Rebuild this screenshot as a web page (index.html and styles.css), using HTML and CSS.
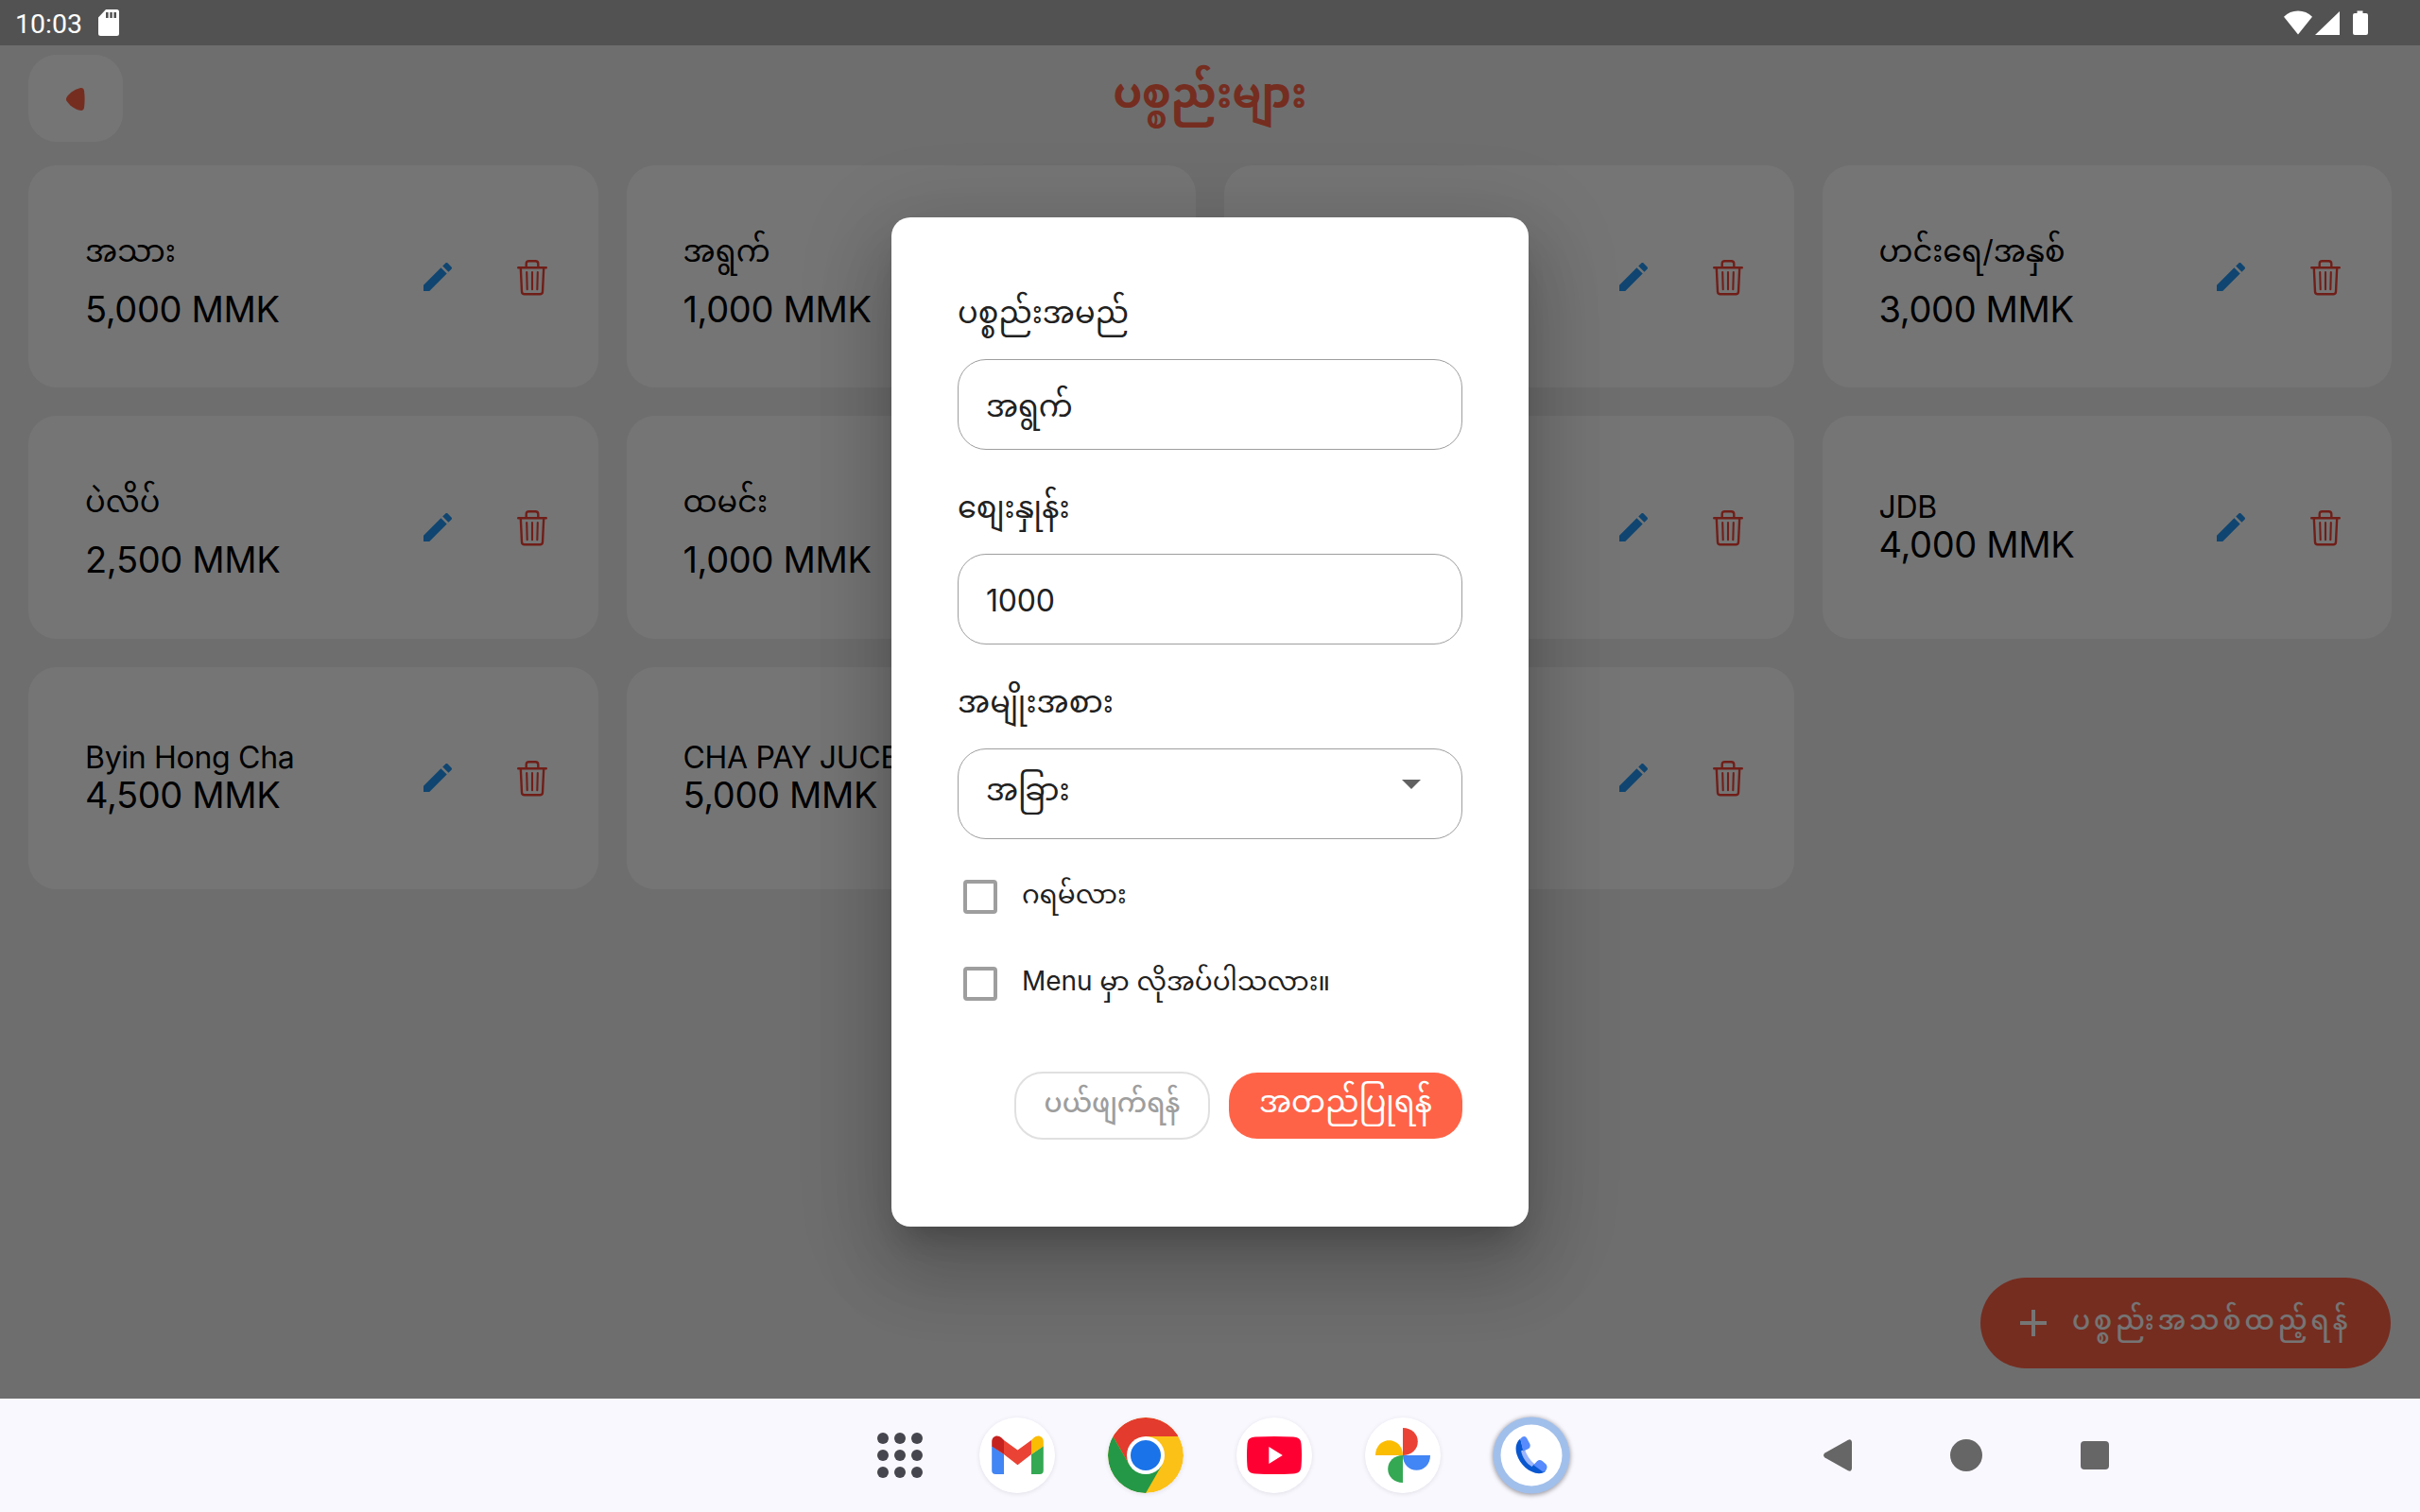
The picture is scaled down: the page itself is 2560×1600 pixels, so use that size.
FILE: index.html
```html
<!DOCTYPE html>
<html lang="my">
<head>
<meta charset="utf-8">
<title>ပစ္စည်းများ</title>
<link rel="stylesheet" href="styles.css">
</head>
<body>
<svg class="defs" aria-hidden="true">
  <symbol id="pencil" viewBox="0 0 24 24"><path d="M3 17.25V21h3.75L17.81 9.94l-3.75-3.75L3 17.25zM20.71 7.04c.39-.39.39-1.02 0-1.41l-2.34-2.34c-.39-.39-1.02-.39-1.41 0l-1.83 1.83 3.75 3.75 1.83-1.83z"/></symbol>
  <symbol id="trash" viewBox="0 0 32 38"><path fill="none" stroke="currentColor" stroke-width="2.4" stroke-linecap="round" stroke-linejoin="round" d="M1.2 8.2H30.8M9.7 8V4.2Q9.7 1.3 12.6 1.3H19.4Q22.3 1.3 22.3 4.2V8M3.8 8.2L5 33.6Q5.2 36.3 7.8 36.3H24.2Q26.8 36.3 27 33.6L28.2 8.2"/><path fill="none" stroke="currentColor" stroke-width="2.1" stroke-linecap="round" d="M10.2 13.1L10.7 31.2M16 13.1V31.2M21.8 13.1L21.3 31.2"/></symbol>
</svg>
<div class="app">
  <header class="status">
    <span class="clock">10:03</span>
    <svg class="sd" viewBox="0 0 22 28"><path fill="#fff" fill-rule="evenodd" d="M8 0H19.5Q22 0 22 2.5V25.5Q22 28 19.5 28H2.5Q0 28 0 25.5V8.5ZM8 3V9H10.6V3ZM12.3 3V9H14.8V3ZM16.4 3V9H19V3Z"/></svg>
    <svg class="signals" viewBox="0 0 90 28"><path fill="#fff" d="M15 25.5L0 6.8Q6.200 .5 15 .5T30 6.800ZM59 1V26H33ZM73 5Q73 3 75 3H77.500V.500H83.500V3H87Q89 3 89 5V24Q89 26 87 26H75Q73 26 73 24Z"/></svg>
  </header>
  <nav class="topbar">
    <button class="back"><svg viewBox="0 0 20 24"><path fill="#ff6347" d="M.3 10.500C2.500 6 8.500 1.500 14.500 .2C17.500-.3 18.600 1 19 3Q20.200 12 19 21C18.600 23 17.500 24.300 14.500 23.800C8.500 22.500 2.500 17.500 .3 13.500Q-.3 12 .3 10.500Z"/></svg></button>
    <h1>ပစ္စည်းများ</h1>
    <span class="topbar-end"></span>
  </nav>
  <main class="grid">
    <article class="card"><div class="info"><p class="name my">အသား</p><p class="price">5,000 MMK</p></div><svg class="edit"><use href="#pencil"/></svg><svg class="del"><use href="#trash"/></svg></article>
    <article class="card"><div class="info"><p class="name my">အရွက်</p><p class="price">1,000 MMK</p></div></article>
    <article class="card"><div class="info"></div><svg class="edit"><use href="#pencil"/></svg><svg class="del"><use href="#trash"/></svg></article>
    <article class="card"><div class="info"><p class="name my">ဟင်းရေ/အနှစ်</p><p class="price">3,000 MMK</p></div><svg class="edit"><use href="#pencil"/></svg><svg class="del"><use href="#trash"/></svg></article>
    <article class="card"><div class="info"><p class="name my">ပဲလိပ်</p><p class="price">2,500 MMK</p></div><svg class="edit"><use href="#pencil"/></svg><svg class="del"><use href="#trash"/></svg></article>
    <article class="card"><div class="info"><p class="name my">ထမင်း</p><p class="price">1,000 MMK</p></div></article>
    <article class="card"><div class="info"></div><svg class="edit"><use href="#pencil"/></svg><svg class="del"><use href="#trash"/></svg></article>
    <article class="card"><div class="info"><p class="name">JDB</p><p class="price">4,000 MMK</p></div><svg class="edit"><use href="#pencil"/></svg><svg class="del"><use href="#trash"/></svg></article>
    <article class="card"><div class="info"><p class="name">Byin Hong Cha</p><p class="price">4,500 MMK</p></div><svg class="edit"><use href="#pencil"/></svg><svg class="del"><use href="#trash"/></svg></article>
    <article class="card"><div class="info"><p class="name">CHA PAY JUCE</p><p class="price">5,000 MMK</p></div></article>
    <article class="card"><div class="info"></div><svg class="edit"><use href="#pencil"/></svg><svg class="del"><use href="#trash"/></svg></article>
  </main>
  <button class="fab"><svg viewBox="0 0 28 28"><path fill="#fff" d="M12 0H16V12H28V16H16V28H12V16H0V12H12Z"/></svg><span>ပစ္စည်းအသစ်ထည့်ရန်</span></button>
  <div class="scrim"></div>
  <section class="dialog" role="dialog">
    <label class="label">ပစ္စည်းအမည်</label>
    <div class="field">အရွက်</div>
    <label class="label">စျေးနှုန်း</label>
    <div class="field">1000</div>
    <label class="label">အမျိုးအစား</label>
    <div class="field select"><span>အခြား</span><svg viewBox="0 0 20 10"><path fill="#616161" d="M0 0H20L10 10Z"/></svg></div>
    <div class="checks">
      <div class="check"><i></i><span>ဂရမ်လား</span></div>
      <div class="check"><i></i><span>Menu မှာ လိုအပ်ပါသလား။</span></div>
    </div>
    <div class="actions"><button class="cancel"><span>ပယ်ဖျက်ရန်</span></button><button class="ok"><span>အတည်ပြုရန်</span></button></div>
  </section>
</div>
<footer class="taskbar">
  <div class="apps">
    <svg class="drawer" viewBox="0 0 48 48"><g fill="#46464f"><circle cx="6" cy="6" r="6"/><circle cx="24" cy="6" r="6"/><circle cx="42" cy="6" r="6"/><circle cx="6" cy="24" r="6"/><circle cx="24" cy="24" r="6"/><circle cx="42" cy="24" r="6"/><circle cx="6" cy="42" r="6"/><circle cx="24" cy="42" r="6"/><circle cx="42" cy="42" r="6"/></g></svg>
    <svg class="icon" viewBox="0 0 80 80"><circle cx="40" cy="40" r="40" fill="#fff"/><path fill="#4285f4" d="M13.200 30L26 39V60H17.200Q13.200 60 13.200 56Z"/><path fill="#34a853" d="M55 39L67.800 30V56Q67.800 60 63.800 60H55Z"/><path fill="#ea4335" d="M26 24L40.500 34.500L55 24V39L40.500 50.200L26 39Z"/><path fill="#c5221f" d="M26 39L13.200 30.500V25.500C13.200 19.500 19.500 17.500 23.500 21.500L26 24Z"/><path fill="#fbbc04" d="M55 39L67.800 30.500V25.500C67.800 19.500 61.500 17.500 57.500 21.500L55 24Z"/></svg>
    <svg class="icon" viewBox="0 0 80 80"><circle cx="40" cy="40" r="40" fill="#fcc117"/><path fill="#e33b2e" d="M40 40L22.700 50L5.360 20A40 40 0 0 1 74.640 20H40Z"/><path fill="#249847" d="M5.360 20L22.700 50L40 55L57.300 50L40 80A40 40 0 0 1 5.360 20Z"/><circle cx="40" cy="40" r="20" fill="#fff"/><circle cx="40" cy="40" r="16" fill="#1a73e8"/></svg>
    <svg class="icon" viewBox="0 0 80 80"><circle cx="40" cy="40" r="40" fill="#fff"/><path fill="#ff0033" d="M20 20.600Q40 19.400 60 20.600C66 21 68.200 23 68.600 29Q69.400 40 68.600 51C68.200 57 66 59 60 59.400Q40 60.600 20 59.400C14 59 11.800 57 11.400 51Q10.600 40 11.400 29C11.800 23 14 21 20 20.600Z"/><path fill="#fff" d="M34.300 31V49L48.800 40Z"/></svg>
    <svg class="icon" viewBox="0 0 80 80"><circle cx="40" cy="40" r="40" fill="#fff"/><path fill="#ea4335" d="M40 11C49.500 11 55.800 17.500 55.800 25.500S49.500 40 40 40Z"/><path fill="#4285f4" d="M69 40C69 49.500 62.500 55.800 54.500 55.800S40 49.500 40 40Z"/><path fill="#34a853" d="M40 69C30.500 69 24.200 62.500 24.200 54.500S30.500 40 40 40Z"/><path fill="#fbbc04" d="M11 40C11 30.500 17.500 24.200 25.500 24.200S40 30.500 40 40Z"/></svg>
    <svg class="icon phone" viewBox="0 0 80 80"><circle cx="40" cy="40" r="40.500" fill="#a1bfeb"/><circle cx="40" cy="40" r="32.500" fill="#fff"/><path fill="#9bb5ff" d="M29 36L33 34Q36 43 43 49L40 53Q31 47 29 36Z"/><path fill="#0957d0" d="M28.300 22.500C23.500 26 22.600 33 24.500 39C28 50 37.500 58.500 48 59.300Q53 59.200 55 56.500L42.500 49.500L40.500 52C34.500 48.500 30.500 42.500 29.200 35.500L31.500 34.500Z"/><path fill="#578bfe" d="M28.300 22.500L30.500 20.600Q33.500 19 35.200 22L38.400 28Q39.600 32 36.500 33.300L31.200 35.700ZM42.200 50.300L46 46.300Q48.500 44 51.500 46L55.500 49.500Q58 53 54.500 56.800L52.500 57.800Z"/></svg>
  </div>
  <div class="nav">
    <svg viewBox="0 0 34 34"><path fill="#666" d="M28 .8Q31.800-.8 32 3.500V30.500Q31.800 34.800 28 33.200L3.500 19.500Q.5 17 3.500 14.500Z"/></svg>
    <svg viewBox="0 0 34 34"><circle cx="17" cy="17" r="17" fill="#666"/></svg>
    <svg viewBox="0 0 34 34"><rect x="2" y="2" width="30" height="30" rx="4" fill="#666"/></svg>
  </div>
</footer>
</body>
</html>
```
FILE: styles.css
```css
* { box-sizing: border-box; margin: 0; padding: 0; }
body { width: 2560px; height: 1600px; overflow: hidden; font-family: Inter, "Noto Sans Myanmar", Padauk, sans-serif; color: #000; }
button { border: 0; background: none; font: inherit; }
.defs { position: absolute; width: 0; height: 0; }
.app { position: relative; height: 1480px; background: #f0f0f0; overflow: hidden; }

.status { position: relative; z-index: 2; height: 48px; padding: 0 70px 0 16px; display: flex; align-items: center; background: #525252; color: #fff; font: 28.5px/48px Roboto, sans-serif; }
.clock { padding-top: 3px; }
.sd { width: 22px; height: 28px; margin-left: 17px; }
.signals { width: 90px; height: 28px; margin-left: auto; margin-right: -16px; margin-top: 1px; }

.topbar { height: 127px; padding: 10px 30px 0; display: flex; align-items: flex-start; justify-content: space-between; }
.back, .topbar-end { width: 100px; height: 92px; }
.back { border-radius: 30px; background: #fff; display: flex; align-items: center; justify-content: center; }
.back svg { width: 20px; height: 24px; margin-top: 2px; }
h1 { color: #ff6347; font-size: 44px; font-weight: 700; line-height: 80px; }

.grid { display: grid; grid-template-columns: repeat(4, 1fr); grid-auto-rows: 235.35px; gap: 30px; padding: 0 30px; }
.card { background: #fff; border-radius: 30px; padding: 0 54px 0 60px; display: flex; align-items: center; }
.info { flex: 1; }
.name { font-size: 32px; line-height: 37px; white-space: nowrap; letter-spacing: -.3px; }
.name.my { line-height: 56px; margin-bottom: 12px; letter-spacing: 0; padding-top: 1px; }
.price { font-size: 38px; line-height: 43px; white-space: nowrap; letter-spacing: -.35px; }
.edit { width: 40px; height: 40px; fill: #2196f3; }
.del { width: 32px; height: 38px; margin: 2px 0 0 64px; color: #f44336; }

.fab { position: absolute; left: 2095px; top: 1352px; width: 434px; height: 96px; border-radius: 48px; background: #ff6347; color: #fff; display: flex; align-items: center; padding-left: 42px; }
.fab svg { width: 28px; height: 28px; }
.fab span { margin-left: 27px; font-size: 28px; font-weight: 500; line-height: 40px; padding-bottom: 7px; letter-spacing: 3.9px; white-space: nowrap; }
.scrim { position: absolute; inset: 48px 0 0; background: rgba(0, 0, 0, .54); }

.dialog { position: absolute; left: 943px; top: 230px; width: 674px; height: 1068px; border-radius: 20px; background: #fff; padding: 73px 70px 0; color: #212121; display: flex; flex-direction: column; box-shadow: 0 22px 30px -14px rgba(0,0,0,.2), 0 48px 76px 6px rgba(0,0,0,.14), 0 18px 92px 16px rgba(0,0,0,.12); }
.label { font-size: 32px; line-height: 56px; margin-bottom: 21px; }
.field { height: 96px; flex: none; margin-bottom: 33px; border: 1px solid #9e9e9e; border-radius: 30px; padding: 3px 29px 0; display: flex; align-items: center; font-size: 32px; line-height: 56px; letter-spacing: -.2px; }
.select { justify-content: space-between; padding: 0 43px 9px 29px; margin-bottom: 15px; }
.select svg { width: 20px; height: 10px; margin-bottom: 11px; }
.check { height: 92px; display: flex; align-items: center; padding-left: 6px; font-size: 28px; line-height: 48px; letter-spacing: -.08px; }
.check i { width: 36px; height: 36px; border: 4px solid #9e9e9e; border-radius: 4px; }
.check span { margin-left: 26px; padding-bottom: 6px; }
.actions { margin-top: 47px; display: flex; justify-content: flex-end; align-items: center; gap: 20px; }
.cancel, .ok { display: flex; justify-content: center; border-radius: 30px; white-space: nowrap; }
.cancel { width: 207px; height: 72px; border: 2px solid #e0e0e0; color: #9e9e9e; font-size: 28px; font-weight: 500; line-height: 62px; }
.ok { width: 247px; height: 70px; background: #ff6347; color: #fff; font-size: 32px; line-height: 62px; }

.taskbar { height: 120px; background: #faf8ff; display: flex; align-items: center; padding: 0 327px 0 928px; justify-content: space-between; }
.apps { display: flex; align-items: center; gap: 56px; }
.drawer { width: 48px; height: 48px; margin-right: 4px; }
.icon { width: 80px; height: 80px; border-radius: 50%; box-shadow: 0 1px 5px rgba(0,0,0,.1); }
.phone { overflow: visible; box-shadow: 0 1px 5px 1px rgba(0,0,0,.4); }
.nav { display: flex; gap: 102px; }
.nav svg { width: 34px; height: 34px; }
```
